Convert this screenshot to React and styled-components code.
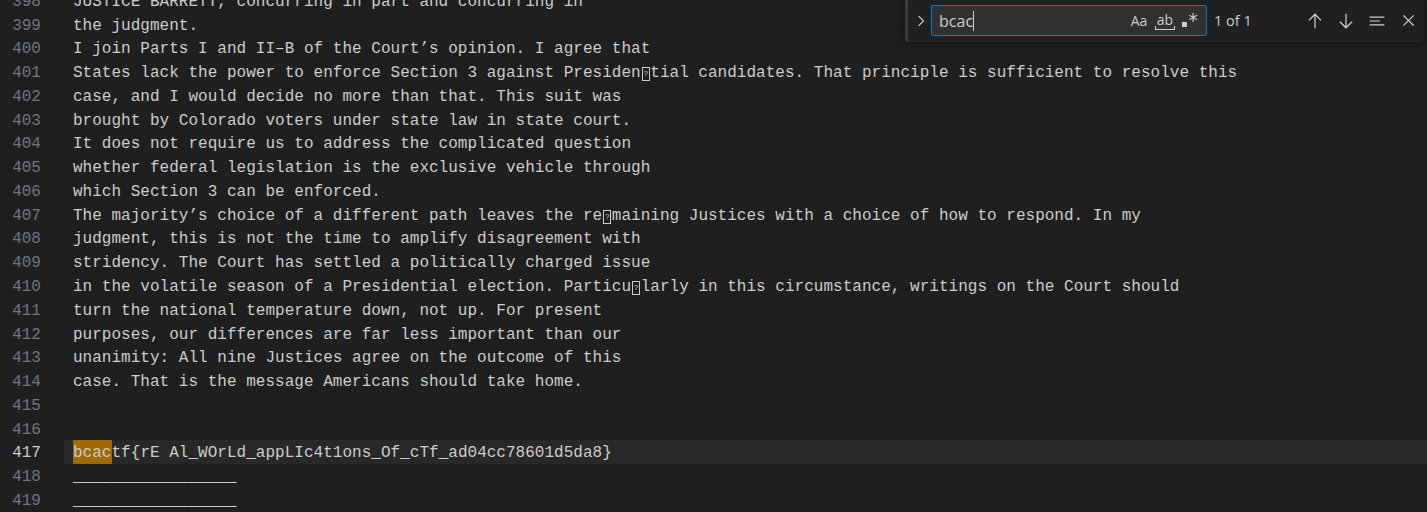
import { createGlobalStyle, styled } from "styled-components";

const GlobalStyle = createGlobalStyle`
  html, body {
    margin: 0;
    padding: 0;
    background: #1f1f1f;
    overflow: hidden;
  }
`;

const Editor = styled.div`
  position: relative;
  width: 1427px;
  height: 512px;
  overflow: hidden;
  background: #1f1f1f;
  font-family: "Liberation Mono", "DejaVu Sans Mono", monospace;
  font-size: 16px;
  letter-spacing: 0.02px;
`;

const Lines = styled.div`
  display: flex;
  flex-direction: column;
  margin-top: -11.2px;
`;

const Row = styled.div`
  display: flex;
  height: 23.78px;
  line-height: 23.78px;
  flex: none;
`;

const Gutter = styled.div`
  width: 41px;
  flex: none;
  text-align: right;
  position: relative;
  top: 2px;
  color: ${(p) => (p.$active ? "#cccccc" : "#6e7681")};
`;

const Content = styled.div`
  flex: 1;
  margin-left: 23px;
  padding-left: 9px;
  white-space: pre;
  color: #cccccc;
  background: ${(p) => (p.$active ? "#282828" : "transparent")};
`;

const Text = styled.span`
  position: relative;
  top: 2px;
`;

const Match = styled.span`
  background: #9e6a03;
  display: inline-block;
  height: 23.78px;
  margin-top: -2px;
  padding-top: 2px;
  box-sizing: border-box;
  vertical-align: top;
  line-height: 23.78px;
`;

const Missing = styled.span`
  display: inline-block;
  width: 9.6px;
  height: 23.78px;
  vertical-align: top;
  position: relative;

  &::after {
    content: "?";
    position: absolute;
    left: 1px;
    top: 5px;
    width: 6px;
    height: 12px;
    border: 1px solid #cccccc;
    font-family: "Liberation Sans", sans-serif;
    font-size: 8px;
    line-height: 12px;
    text-align: center;
    color: #cccccc;
  }
`;

const FindWidget = styled.div`
  position: absolute;
  top: 0;
  right: 3px;
  width: 519px;
  height: 42px;
  box-sizing: border-box;
  background: #202020;
  border-left: 3px solid #3c3c3c;
  border-bottom: 1px solid #2b2b2b;
  border-radius: 0 0 4px 4px;
  box-shadow: 0 0 8px 2px rgba(0, 0, 0, 0.36);
  display: flex;
  align-items: center;
  padding-left: 4px;
  font-family: "Open Sans", "Noto Sans", sans-serif;
  color: #cccccc;
`;

const Toggle = styled.div`
  width: 18px;
  display: flex;
  justify-content: center;
  color: #cccccc;
`;

const InputBox = styled.div`
  margin-left: 1px;
  width: 276px;
  height: 31px;
  box-sizing: border-box;
  border: 1px solid #0078d4;
  border-radius: 2px;
  background: #313131;
  display: flex;
  align-items: center;
  padding: 0 5px 0 7px;
`;

const Query = styled.div`
  flex: 1;
  font-size: 16px;
  color: #cccccc;
  display: flex;
  align-items: center;

  &::after {
    content: "";
    width: 1px;
    height: 20px;
    background: #cccccc;
  }
`;

const Option = styled.div`
  width: 22px;
  height: 22px;
  margin-left: ${(p) => p.$gap || 0}px;
  display: flex;
  align-items: center;
  justify-content: center;
  position: relative;
  font-size: 14px;
  color: #cccccc;
`;

const WholeWord = styled.span`
  font-size: 14px;
  position: relative;
  top: -1px;
  padding: 0 2px;
  line-height: 14px;

  &::after {
    content: "";
    position: absolute;
    left: 0;
    right: 0;
    bottom: -3px;
    height: 3px;
    border: 1px solid #cccccc;
    border-top: none;
  }
`;

const Regex = styled.span`
  display: flex;
  align-items: flex-end;
  gap: 1px;

  &::before {
    content: "";
    width: 5px;
    height: 5px;
    background: #cccccc;
    margin-bottom: 2px;
  }
`;

const Star = styled.span`
  font-size: 19px;
  line-height: 14px;
  height: 16px;
  font-family: "DejaVu Sans", sans-serif;
`;

const Count = styled.div`
  margin-left: 7px;
  width: 90px;
  font-size: 14.5px;
  color: #cccccc;
`;

const Actions = styled.div`
  display: flex;
  gap: 9px;
  margin-left: 0;
`;

const Action = styled.div`
  width: 22px;
  height: 22px;
  display: flex;
  align-items: center;
  justify-content: center;
`;

const text = [
  "JUSTICE BARRETT, concurring in part and concurring in",
  "the judgment.",
  "I join Parts I and II–B of the Court’s opinion. I agree that",
  ["States lack the power to enforce Section 3 against Presiden", "tial candidates. That principle is sufficient to resolve this"],
  "case, and I would decide no more than that. This suit was",
  "brought by Colorado voters under state law in state court.",
  "It does not require us to address the complicated question",
  "whether federal legislation is the exclusive vehicle through",
  "which Section 3 can be enforced.",
  ["The majority’s choice of a different path leaves the re", "maining Justices with a choice of how to respond. In my"],
  "judgment, this is not the time to amplify disagreement with",
  "stridency. The Court has settled a politically charged issue",
  ["in the volatile season of a Presidential election. Particu", "larly in this circumstance, writings on the Court should"],
  "turn the national temperature down, not up. For present",
  "purposes, our differences are far less important than our",
  "unanimity: All nine Justices agree on the outcome of this",
  "case. That is the message Americans should take home.",
  "",
  "",
  "FLAG",
  "_________________",
  "_________________",
];

function LineText({ value }) {
  if (Array.isArray(value)) {
    return (
      <>
        {value[0]}
        <Missing />
        {value[1]}
      </>
    );
  }
  if (value === "FLAG") {
    return (
      <>
        <Match>bcac</Match>tf{"{"}rE Al_WOrLd_appLIc4t1ons_Of_cTf_ad04cc78601d5da8{"}"}
      </>
    );
  }
  return value;
}

const Icon = ({ children, size = 16 }) => (
  <svg width={size} height={size} viewBox="0 0 16 16" fill="none" stroke="#cccccc" strokeWidth="1.1" strokeLinecap="square">
    {children}
  </svg>
);

export default function App() {
  return (
    <>
      <GlobalStyle />
      <Editor>
        <Lines>
          {text.map((line, i) => {
            const num = 398 + i;
            const active = num === 417;
            return (
              <Row key={num}>
                <Gutter $active={active}>{num}</Gutter>
                <Content $active={active}>
                  <Text>
                    <LineText value={line} />
                  </Text>
                </Content>
              </Row>
            );
          })}
        </Lines>

        <FindWidget>
          <Toggle>
            <Icon>
              <path d="M6 3.5l4.5 4.5L6 12.5" />
            </Icon>
          </Toggle>
          <InputBox>
            <Query>bcac</Query>
            <Option>Aa</Option>
            <Option $gap={4}>
              <WholeWord>ab</WholeWord>
            </Option>
            <Option $gap={3}>
              <Regex>
                <Star>*</Star>
              </Regex>
            </Option>
          </InputBox>
          <Count>1 of 1</Count>
          <Actions>
            <Action>
              <Icon size={18}>
                <path d="M8 2v12M3 7l5-5 5 5" />
              </Icon>
            </Action>
            <Action>
              <Icon size={18}>
                <path d="M8 2v12M3 9l5 5 5-5" />
              </Icon>
            </Action>
            <Action>
              <Icon size={18}>
                <path d="M2 4.5h12M2 8h8M2 11.5h12" />
              </Icon>
            </Action>
            <Action>
              <Icon size={17}>
                <path d="M3.5 3.5l9 9M12.5 3.5l-9 9" />
              </Icon>
            </Action>
          </Actions>
        </FindWidget>
      </Editor>
    </>
  );
}
